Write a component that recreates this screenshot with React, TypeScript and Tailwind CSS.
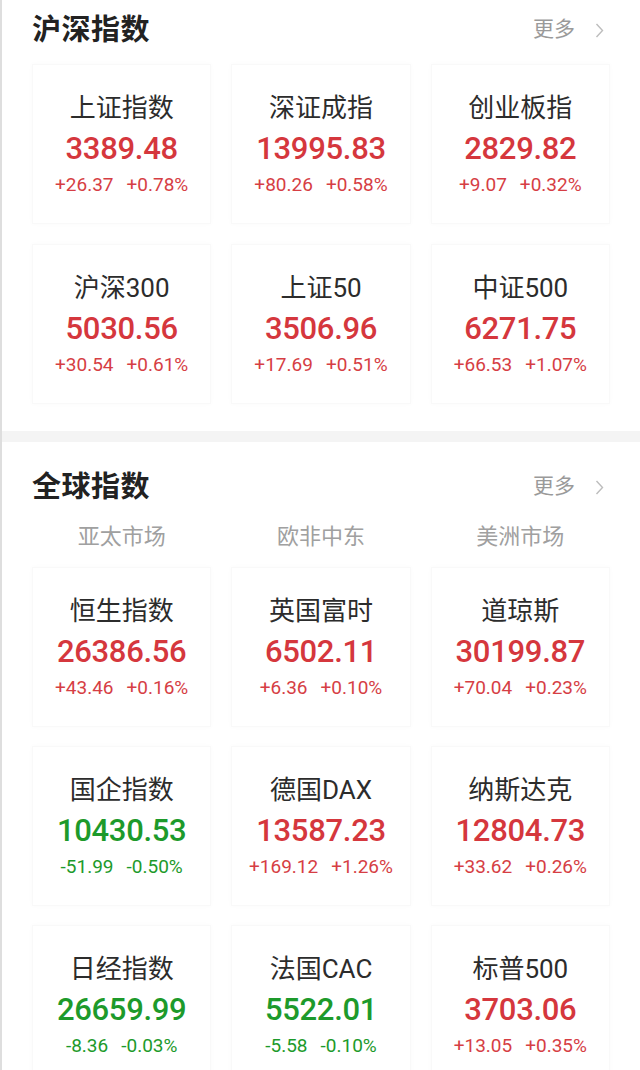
import clsx from "clsx";

type Index = { name: string; value: string; diff: string; pct: string; up: boolean };

const hs: Index[] = [
  { name: "上证指数", value: "3389.48", diff: "+26.37", pct: "+0.78%", up: true },
  { name: "深证成指", value: "13995.83", diff: "+80.26", pct: "+0.58%", up: true },
  { name: "创业板指", value: "2829.82", diff: "+9.07", pct: "+0.32%", up: true },
  { name: "沪深300", value: "5030.56", diff: "+30.54", pct: "+0.61%", up: true },
  { name: "上证50", value: "3506.96", diff: "+17.69", pct: "+0.51%", up: true },
  { name: "中证500", value: "6271.75", diff: "+66.53", pct: "+1.07%", up: true },
];

const global: Index[] = [
  { name: "恒生指数", value: "26386.56", diff: "+43.46", pct: "+0.16%", up: true },
  { name: "英国富时", value: "6502.11", diff: "+6.36", pct: "+0.10%", up: true },
  { name: "道琼斯", value: "30199.87", diff: "+70.04", pct: "+0.23%", up: true },
  { name: "国企指数", value: "10430.53", diff: "-51.99", pct: "-0.50%", up: false },
  { name: "德国DAX", value: "13587.23", diff: "+169.12", pct: "+1.26%", up: true },
  { name: "纳斯达克", value: "12804.73", diff: "+33.62", pct: "+0.26%", up: true },
  { name: "日经指数", value: "26659.99", diff: "-8.36", pct: "-0.03%", up: false },
  { name: "法国CAC", value: "5522.01", diff: "-5.58", pct: "-0.10%", up: false },
  { name: "标普500", value: "3703.06", diff: "+13.05", pct: "+0.35%", up: true },
];

const cjk = "font-['Roboto','Noto_Sans_CJK_SC',sans-serif]";

const SectionHeader = ({ title }: { title: string }) => (
  <div className="flex items-center justify-between h-[30px] pl-[30px] pr-[36px]">
    <h2 className="text-[29px] leading-[30px] font-bold text-[#222] tracking-[0.5px]">{title}</h2>
    <div className="flex items-center gap-[20px] text-[21px] text-[#9a9a9a]">
      <span>更多</span>
      <svg width="9" height="15" viewBox="0 0 9 15" fill="none">
        <polyline points="1.5,1 7.5,7.5 1.5,14" stroke="#bdbdbd" strokeWidth="1.4" />
      </svg>
    </div>
  </div>
);

const IndexCard = ({ item }: { item: Index }) => (
  <div className="h-[160px] flex flex-col items-center pt-[28px] bg-white border border-[#f9f9f9] shadow-[0_0_5px_rgba(0,0,0,0.025)]">
    <p className="text-[26px] leading-[30px] text-[#2c2c2c]">{item.name}</p>
    <p
      className={clsx(
        "mt-[8px] text-[31px] leading-[36px] font-medium tracking-[-0.3px]",
        item.up ? "text-[#d5373d]" : "text-[#1d9a2b]"
      )}
    >
      {item.value}
    </p>
    <div
      className={clsx(
        "mt-[7px] flex gap-[13px] text-[19px] leading-[22px]",
        item.up ? "text-[#d63e44]" : "text-[#1d9a2b]"
      )}
    >
      <span>{item.diff}</span>
      <span>{item.pct}</span>
    </div>
  </div>
);

export default function App() {
  return (
    <div className={clsx(cjk, "w-[640px] h-[1070px] overflow-hidden bg-white border-l-2 border-[#dedede]")}>
      <section className="pt-[15px] pb-[27px]">
        <SectionHeader title="沪深指数" />
        <div className="grid grid-cols-3 gap-x-[20px] gap-y-[20px] px-[30px] mt-[19px]">
          {hs.map((it) => (
            <IndexCard key={it.name} item={it} />
          ))}
        </div>
      </section>

      <div className="h-[11px] bg-[#f4f4f4]" />

      <section className="pt-[30px]">
        <SectionHeader title="全球指数" />
        <div className="grid grid-cols-3 gap-x-[20px] px-[30px] mt-[23px]">
          {["亚太市场", "欧非中东", "美洲市场"].map((t) => (
            <p key={t} className="text-center text-[22px] leading-[24px] text-[#a0a0a0]">
              {t}
            </p>
          ))}
        </div>
        <div className="grid grid-cols-3 gap-x-[20px] gap-y-[19px] px-[30px] mt-[18px]">
          {global.map((it) => (
            <IndexCard key={it.name} item={it} />
          ))}
        </div>
      </section>
    </div>
  );
}
